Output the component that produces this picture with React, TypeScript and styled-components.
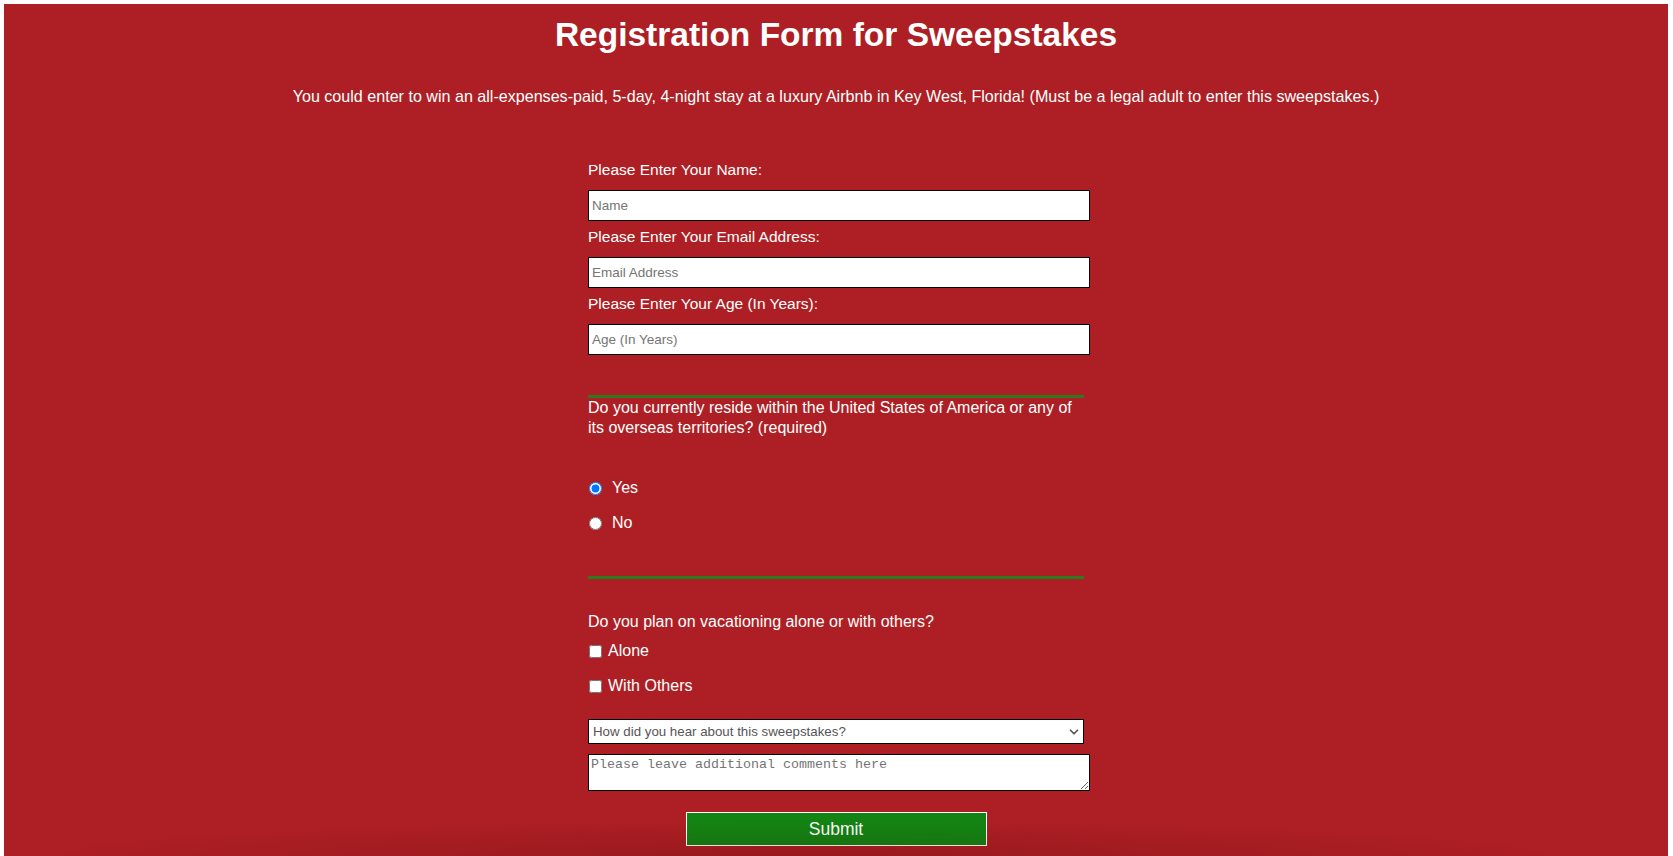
import React from "react";
import styled, { createGlobalStyle } from "styled-components";
import { ChevronDown } from "lucide-react";

const GlobalStyle = createGlobalStyle`
  html, body { background: #ffffff; }
  body {
    margin: 4px 5px 0 4px;
    font-family: "Liberation Sans", Arial, sans-serif;
    overflow: hidden;
  }
  * { box-sizing: border-box; }
`;

const Page = styled.main`
  background: #ad1f24;
  min-height: calc(100vh - 4px);
  padding-top: 11px;
  text-align: center;
  color: #ffffff;
  font-family: "Liberation Sans", Arial, sans-serif;
`;

const Title = styled.h1`
  margin: 0;
  font-size: 33.5px;
  line-height: 40px;
  font-weight: 700;
`;

const Intro = styled.p`
  margin: 31px 0 0;
  font-size: 16.1px;
  line-height: 20px;
`;

const Form = styled.form`
  width: 496px;
  margin: 54px auto 0;
  text-align: left;
  display: flex;
  flex-direction: column;
`;

const Fields = styled.div`
  display: flex;
  flex-direction: column;
  gap: 6px;
`;

const Field = styled.label`
  display: flex;
  flex-direction: column;
  gap: 10px;
  font-size: 15.5px;
  line-height: 20px;
`;

const TextInput = styled.input`
  width: calc(100% + 6px);
  height: 31px;
  padding: 0 3px;
  border: 1px solid #000000;
  border-radius: 0;
  background: #ffffff;
  font-family: "Liberation Sans", Arial, sans-serif;
  font-size: 13.5px;
  color: #000;
  outline: none;
  &::placeholder { color: #757575; }
`;

const ResidenceBox = styled.div`
  margin-top: 40px;
  border-top: 3px solid #2c7a1d;
  border-bottom: 3px solid #2c7a1d;
  padding-bottom: 43px;
`;

const Question = styled.p<{ $max?: number }>`
  margin: 0;
  max-width: ${(p) => (p.$max ? `${p.$max}px` : "none")};
  font-size: 16px;
  line-height: 20px;
`;

const ChoiceGroup = styled.div<{ $top: number }>`
  display: flex;
  flex-direction: column;
  gap: 15px;
  margin-top: ${(p) => p.$top}px;
`;

const Choice = styled.label<{ $gap: number }>`
  display: flex;
  align-items: center;
  gap: ${(p) => p.$gap}px;
  height: 20px;
  font-size: 16px;
  line-height: 20px;
`;

const Radio = styled.input`
  margin: 0 0 0 1px;
  width: 13px;
  height: 13px;
`;

const Check = styled.input`
  margin: 0 0 0 1px;
  width: 13px;
  height: 13px;
`;

const Vacation = styled.div`
  margin-top: 33px;
`;

const SelectWrap = styled.div`
  position: relative;
  margin-top: 23px;
  width: 100%;
`;

const Select = styled.select`
  appearance: none;
  width: 100%;
  height: 25px;
  padding: 0 24px 0 4px;
  border: 1px solid #000000;
  border-radius: 0;
  background: #ffffff;
  color: #555555;
  font-family: "Liberation Sans", Arial, sans-serif;
  font-size: 13.3px;
  outline: none;
`;

const Chevron = styled(ChevronDown)`
  position: absolute;
  right: 3px;
  top: 6px;
  color: #555555;
  pointer-events: none;
`;

const Comments = styled.textarea`
  display: block;
  margin-top: 10px;
  width: calc(100% + 6px);
  height: 37px;
  padding: 2px;
  border: 1px solid #000000;
  border-radius: 0;
  background: #ffffff;
  font-family: "Liberation Mono", monospace;
  font-size: 13.33px;
  outline: none;
  &::placeholder { color: #757575; }
`;

const Submit = styled.button`
  align-self: center;
  margin-top: 21px;
  width: 301px;
  height: 34px;
  background: #138413;
  border: 1px solid #ffffff;
  color: #ffffff;
  font-family: "Liberation Sans", Arial, sans-serif;
  font-size: 17.5px;
  cursor: pointer;
`;

const BottomShade = styled.div`
  position: fixed;
  left: 4px;
  right: 5px;
  bottom: 0;
  height: 34px;
  pointer-events: none;
  background: radial-gradient(ellipse 45% 100% at 48% 100%, rgba(60, 0, 0, 0.18), rgba(60, 0, 0, 0) 100%);
`;

export default function App() {
  return (
    <>
      <GlobalStyle />
      <Page>
        <Title>Registration Form for Sweepstakes</Title>
        <Intro>
          You could enter to win an all-expenses-paid, 5-day, 4-night stay at a luxury Airbnb in Key West,
          Florida! (Must be a legal adult to enter this sweepstakes.)
        </Intro>
        <Form onSubmit={(e) => e.preventDefault()}>
          <Fields>
            <Field>
              Please Enter Your Name:
              <TextInput type="text" placeholder="Name" />
            </Field>
            <Field>
              Please Enter Your Email Address:
              <TextInput type="email" placeholder="Email Address" />
            </Field>
            <Field>
              Please Enter Your Age (In Years):
              <TextInput type="number" placeholder="Age (In Years)" />
            </Field>
          </Fields>

          <ResidenceBox>
            <Question $max={488}>
              Do you currently reside within the United States of America or any of its overseas territories?
              (required)
            </Question>
            <ChoiceGroup $top={40}>
              <Choice $gap={10}>
                <Radio type="radio" name="resident" defaultChecked />
                Yes
              </Choice>
              <Choice $gap={10}>
                <Radio type="radio" name="resident" />
                No
              </Choice>
            </ChoiceGroup>
          </ResidenceBox>

          <Vacation>
            <Question>Do you plan on vacationing alone or with others?</Question>
            <ChoiceGroup $top={9}>
              <Choice $gap={6}>
                <Check type="checkbox" />
                Alone
              </Choice>
              <Choice $gap={6}>
                <Check type="checkbox" />
                With Others
              </Choice>
            </ChoiceGroup>
          </Vacation>

          <SelectWrap>
            <Select defaultValue="">
              <option value="" disabled>
                How did you hear about this sweepstakes?
              </option>
              <option value="social">Social media</option>
              <option value="friend">A friend</option>
              <option value="ad">Advertisement</option>
            </Select>
            <Chevron size={14} strokeWidth={3} />
          </SelectWrap>

          <Comments placeholder="Please leave additional comments here" />

          <Submit type="submit">Submit</Submit>
        </Form>
      </Page>
      <BottomShade />
    </>
  );
}
